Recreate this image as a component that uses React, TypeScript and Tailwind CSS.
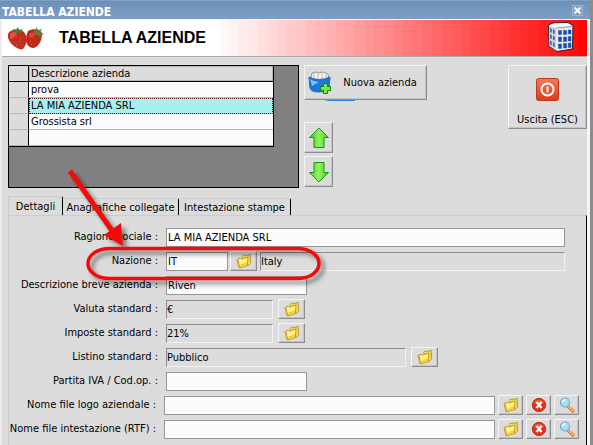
import React from "react";
import clsx from "clsx";

const companies = ["prova", "LA MIA AZIENDA SRL", "Grossista srl", ""];

const tabs = ["Dettagli", "Anagrafiche collegate", "Intestazione stampe"];

const bands = Array.from({ length: 39 }, (_, i) => i / 38);

const raised =
  "border border-t-[#f4f4f4] border-l-[#f4f4f4] border-r-[#8c8c8c] border-b-[#8c8c8c] bg-[#dcdcdc] shadow-[inset_-1px_-1px_0_#c4c4c4]";

const sunkenBox = "border-t-[#8c8c8c] border-l-[#8c8c8c] border-r-[#f2f2f2] border-b-[#f2f2f2] bg-[#dcdcdc] px-0";

function FolderIcon() {
  return (
    <svg width="16" height="16" viewBox="0 0 16 16">
      <path d="M6.500 3.500 7 2.500 10 2l.8.8L14 1l.8 9-3.300 3z" fill="#f8dc50" stroke="#b98e1c" strokeWidth=".9" />
      <path d="M1 6.500 4.500 5l1 1.200L12 4l-.6 8.600L3.200 15z" fill="#fff38a" stroke="#b98e1c" strokeWidth=".9" />
      <path d="M3.800 12 11.200 9l-.2 3.200-7.400 2.200z" fill="#f6cf30" />
      <path d="M1.200 6.500 3.300 14.800l.8-.4L2.600 6.500z" fill="#d0a030" />
    </svg>
  );
}

function DeleteIcon() {
  return (
    <svg width="16" height="16" viewBox="0 0 16 16">
      <circle cx="8" cy="8" r="6.700" fill="#ee2a12" stroke="#c03a2a" />
      <path d="M3 6a5.300 5 0 0 1 10 0q-5 2-10 0" fill="#ff765c" opacity=".6" />
      <path d="m5.400 5 5.200 6M10.600 5 5.400 11" stroke="#fff" strokeWidth="2.400" />
    </svg>
  );
}

function SearchIcon() {
  return (
    <svg width="16" height="16" viewBox="0 0 16 16">
      <path d="m9 9.500 5 4.500" stroke="#d07a3c" strokeWidth="3.200" strokeLinecap="round" />
      <path d="m10 10 4 3.600" stroke="#ffb45e" strokeWidth="1.800" strokeLinecap="round" />
      <circle cx="6" cy="5.500" r="4.500" fill="#a9def8" stroke="#7aa6cc" strokeWidth="1.200" />
      <path d="M3.300 5a3 3 0 0 1 3.200-2.200" stroke="#fff" strokeWidth="1.400" fill="none" />
    </svg>
  );
}

function StrawberryIcon() {
  return (
    <svg width="38" height="25" viewBox="0 0 38 25">
      <path d="M21 5c5-3 12-2 14 2 0 7-2 12-8 15-6 0-9-5-8-11z" fill="#bd2a1b" />
      <path d="M1 8c2-5 12-6 16-2 4 5 3 12-1 17-2 1-4 0-6-1C4 19 0 13 1 8z" fill="#c22d1c" />
      <path d="M2.500 9c2-3 5-4 7-2-1 4-4 5-6 6z" fill="#de5440" />
      <path d="M22 8c2-2 5-2 6-1 0 3-2 4-5 5z" fill="#d44c38" />
      <path d="m4 5 3-.5-1-2 3 1.500 2-3 1 3 4-1-2 2.500 2 1.500-4-.5-3 1-1-1.500z" fill="#5c7334" />
      <path d="m26 5 3-1 0-3 2 3 4-1-2 3 4 2-4 1 1 4-3-4-3 0 0-3z" fill="#647b38" />
      <path d="M5 12h1m3-2h1m3 2h1m-7 4h1m4 0h1m1 3h1m-6 0h1m9-7h1m3 3h1m2-3h1m-3 6h1m-5 0h1" stroke="#dd6848" />
    </svg>
  );
}

function BuildingIcon() {
  return (
    <svg width="28" height="32" viewBox="0 0 28 32">
      <path d="M1.500 4 6 2l15-.5L26 4.500 25.500 28 10 30.500 2 25z" fill="#ececec" stroke="#222" />
      <path d="M2 4.500 9 7v22.500L2.500 25z" fill="#d0d0d0" />
      <path d="m2 4.500 5-2h13.500l5 2.500L9 7z" fill="#fafafa" />
      <path d="m9 7 16.500-1.500" stroke="#999" />
      <path d="M11.500 9.500h3v4h-3zm5 0h3v4h-3zm4.700-.5h2.800v4h-2.800zM11.500 16h3v4.500h-3zm5 0h3v4.500h-3zm4.700-.5h2.800V20h-2.800zM11.500 23h3v4.500h-3zm5-.500h3V27h-3zm4.700-.500h2.800v4.500h-2.800z" fill="#1550b4" stroke="#1550b4" strokeWidth=".5" />
      <path d="m3 7 1.700.7v4L3 11zm3 1.200 1.700.7v4L6 12.200zM3 13.300l1.700.8v4L3 17.200zm3 1.500 1.700.8v4L6 18.700zm-3 4.700 1.700.9v4L3 23.300zm3 1.800 1.700 1v4L6 25z" fill="#2b68c8" />
    </svg>
  );
}

function NewCompanyIcon() {
  return (
    <svg width="24" height="24" viewBox="0 0 24 24">
      <path d="m3 7 1-5 4-1 3 1 3-1 4 1 2 1 1 5-9 3z" fill="#f4f4f4" stroke="#999" />
      <path d="M6 2v5m4-5v6m4-6v6m4-5v4" stroke="#b5b5b5" />
      <path d="M1 6q10 5 21 0l-1 11q-2 4-10 4-8 0-9-4z" fill="#1878dc" stroke="#2468b4" />
      <path d="M2 8q4 3 9 3l-7 4z" fill="#7cc4fa" />
      <path d="M15.500 12.500h4v3h3v4h-3v3h-4v-3h-3v-4h3z" fill="#7ae838" stroke="#1b7d1b" />
    </svg>
  );
}

function ArrowIcon({ down }: { down?: boolean }) {
  return (
    <svg width="22" height="22" viewBox="0 0 22 22" className={clsx(down && "rotate-180")}>
      <defs>
        <linearGradient id="green" x1="0" x2="1">
          <stop offset="0" stopColor="#3fc81e" />
          <stop offset=".5" stopColor="#8cf55a" />
          <stop offset="1" stopColor="#4ed42a" />
        </linearGradient>
      </defs>
      <path d="M11 1 20.500 10.500H16v10H6v-10H1.500z" fill="url(#green)" stroke="#239020" />
    </svg>
  );
}

function PowerIcon() {
  return (
    <svg width="23" height="23" viewBox="0 0 23 23">
      <defs>
        <linearGradient id="power" x2="0" y2="1">
          <stop stopColor="#f07a58" />
          <stop offset="1" stopColor="#dc3c18" />
        </linearGradient>
      </defs>
      <rect x=".5" y=".5" width="22" height="22" rx="2" fill="url(#power)" stroke="#c0391c" />
      <circle cx="11.500" cy="11.500" r="6" fill="none" stroke="#fff" strokeWidth="2" />
      <path d="M11.500 8.500v6" stroke="#fff" strokeWidth="2" />
    </svg>
  );
}

function IconButton({ label, wide, children }: { label: string; wide?: boolean; children: React.ReactNode }) {
  return (
    <button
      type="button"
      aria-label={label}
      className={clsx("flex h-5 shrink-0 items-center justify-center", wide ? "w-[27px]" : "w-[25px]", raised)}
    >
      {children}
    </button>
  );
}

interface RowProps {
  id: string;
  label: string;
  value?: string;
  sunken?: boolean;
  file?: boolean;
  width: string;
  children?: React.ReactNode;
}

function Row({ id, label, value = "", sunken, file, width, children }: RowProps) {
  return (
    <div className="flex h-5 items-center">
      <label htmlFor={id} className={clsx("mr-2 shrink-0 text-right whitespace-nowrap", file ? "w-[147px]" : "w-[149px]")}>
        {label} :
      </label>
      <input
        id={id}
        defaultValue={value}
        readOnly={sunken}
        className={clsx("h-[19px] min-w-0 border outline-none", width, sunken ? sunkenBox : "border-[#969696] bg-[#fbfbfb] px-px")}
      />
      {children}
    </div>
  );
}

function Annotation() {
  return (
    <svg className="pointer-events-none absolute top-0 left-0" width="340" height="300" viewBox="0 0 340 300">
      <g style={{ filter: "drop-shadow(4px 4px 2px rgba(0,0,0,.45))" }}>
        <path
          d="M110 248.500H297C311 248.500 319 256 319 263.500S311 278.500 297 278.500H110C96 278.500 88 271 88 263.500S96 248.500 110 248.500z"
          fill="none"
          stroke="#f80808"
          strokeWidth="3.500"
        />
        <path d="m70 171 43 61" stroke="#f80808" strokeWidth="5" />
        <path d="m123 246-19-11 17-12z" fill="#f80808" />
      </g>
    </svg>
  );
}

function App() {
  return (
    <div className="relative flex min-h-screen bg-[#8c8c8c] pr-[3px] font-['DejaVu_Sans_Condensed','DejaVu_Sans',sans-serif] text-[11px] leading-[14px] text-black">
      <div className="flex min-w-0 flex-1 flex-col bg-[#dcdcdc]">
        <div className="flex h-[19px] items-center justify-between border-t border-[#7f9fc4] bg-gradient-to-b from-[#6b91b8] to-[#7e9fc5] pr-[7px] pl-0.5">
          <span className="pt-1 text-[12px] font-bold text-white">TABELLA AZIENDE</span>
          <button type="button" aria-label="Chiudi" className="flex size-[11px] items-center justify-center border border-[#9cb6d2] bg-[#7f9fc0]">
            <svg width="7" height="7" viewBox="0 0 7 7" className="shrink-0">
              <path d="m.5.5 6 6m0-6-6 6" stroke="#fff" strokeWidth="2" />
            </svg>
          </button>
        </div>

        <div className="flex flex-1 flex-col border-r-[3px] border-l-2 border-r-[#f4f6f8] border-l-[#ececec]">
          <header className="relative flex h-[38px] border-t border-b border-t-[#eef2f6] border-b-[#aaa] bg-white">
            <div className="flex w-[208px] shrink-0 items-center gap-3.5 pl-[5px]">
              <StrawberryIcon />
              <h1 className="font-['Liberation_Sans',Arial,sans-serif] text-[16px] font-bold whitespace-nowrap">TABELLA AZIENDE</h1>
            </div>
            <div className="flex flex-1">
              {bands.map((alpha) => (
                <div key={alpha} className="flex-1" style={{ backgroundColor: `rgb(255 ${255 - alpha * 250} ${255 - alpha * 250})` }} />
              ))}
            </div>
            <div className="absolute top-px right-3">
              <BuildingIcon />
            </div>
          </header>

          <div className="flex items-start pt-2 pl-1.5">
            <div className="h-[123px] w-[291px] shrink-0 border border-black bg-[#808080]">
              <table className="w-[265px] table-fixed border-separate border-spacing-0 border-r border-b border-black leading-[15px]">
                <thead>
                  <tr>
                    <th className="h-4 w-5 border-r border-b border-black bg-[#dcdcdc] p-0" />
                    <th className="h-4 border-b border-black bg-[#dcdcdc] p-0 pl-0.5 text-left font-normal shadow-[inset_-1px_-1px_0_#b4b4b4,inset_1px_1px_0_#b4b4b4]">
                      Descrizione azienda
                    </th>
                  </tr>
                </thead>
                <tbody>
                  {companies.map((name, i) => (
                    <tr key={i}>
                      <td className="h-4 border-r border-b border-r-black border-b-[#b8b8b8] bg-[#dcdcdc] p-0" />
                      <td
                        className={clsx(
                          "h-4 border-b border-[#b8b8b8] p-0 pl-0.5",
                          i === 1 ? "bg-[#a8f0f0] outline-1 -outline-offset-1 outline-dotted outline-[#501010]" : "bg-[#fbfbfb]"
                        )}
                      >
                        {name}
                      </td>
                    </tr>
                  ))}
                </tbody>
              </table>
            </div>

            <div className="ml-[5px] flex flex-col items-start">
              <button type="button" className={clsx("relative flex h-[35px] w-[123px] items-center pl-[3px]", raised)}>
                <NewCompanyIcon />
                <span className="flex-1 pl-0.5 text-center whitespace-nowrap">Nuova azienda</span>
                <span className="absolute -bottom-[2px] left-5 h-px w-[30px] border-l-2 border-[#70d860] bg-[#3088e0]" />
              </button>
              <button type="button" aria-label="Sposta su" className={clsx("mt-[22px] flex h-[31px] w-[29px] items-center justify-center", raised)}>
                <ArrowIcon />
              </button>
              <button type="button" aria-label="Sposta giù" className={clsx("mt-[3px] flex h-[31px] w-[29px] items-center justify-center", raised)}>
                <ArrowIcon down />
              </button>
            </div>

            <button type="button" className={clsx("ml-auto flex h-16 w-[79px] flex-col items-center justify-between pt-3 pb-px", raised)}>
              <PowerIcon />
              <span>Uscita (ESC)</span>
            </button>
          </div>

          <div role="tablist" className="mt-2 flex h-[19px] items-end pl-1.5">
            {tabs.map((tab, i) => (
              <button
                key={tab}
                type="button"
                role="tab"
                aria-selected={i === 0}
                className={clsx(
                  "rounded-tr-[2px] border-t border-r border-t-[#cdcdcd] border-r-black whitespace-nowrap",
                  i === 0 && "h-[19px] w-[55px] rounded-tl-[2px] border-l border-l-[#cdcdcd] pt-0.5",
                  i === 1 && "h-[17px] w-[116px] pt-0.5",
                  i === 2 && "h-[17px] w-[112px] pt-0.5"
                )}
              >
                {tab}
              </button>
            ))}
          </div>

          <form className="ml-1.5 flex flex-1 flex-col gap-1 border-t border-r border-l border-t-[#cdcdcd] border-r-black border-l-[#cdcdcd] pt-[11px] pr-[7px]">
            <Row id="ragione" label="Ragione sociale" value="LA MIA AZIENDA SRL" width="mr-[14px] flex-1" />
            <Row id="nazione" label="Nazione" value="IT" width="w-[62px]">
              <div className="mr-[14px] ml-0.5 flex flex-1 items-center gap-[3px]">
                <IconButton label="Scegli nazione" wide>
                  <FolderIcon />
                </IconButton>
                <input aria-label="Nome nazione" readOnly value="Italy" className={clsx("h-[19px] min-w-0 flex-1 border outline-none", sunkenBox)} />
              </div>
            </Row>
            <Row id="descrizione" label="Descrizione breve azienda" value="Riven" width="w-[141px]" />
            <Row id="valuta" label="Valuta standard" value="€" sunken width="mr-[5px] w-[107px]">
              <IconButton label="Scegli valuta" wide>
                <FolderIcon />
              </IconButton>
            </Row>
            <Row id="imposte" label="Imposte standard" value="21%" sunken width="mr-[5px] w-[107px]">
              <IconButton label="Scegli imposte" wide>
                <FolderIcon />
              </IconButton>
            </Row>
            <Row id="listino" label="Listino standard" value="Pubblico" sunken width="mr-[5px] w-[240px]">
              <IconButton label="Scegli listino" wide>
                <FolderIcon />
              </IconButton>
            </Row>
            <Row id="partita" label="Partita IVA / Cod.op." width="w-[141px]" />
            {["Nome file logo aziendale", "Nome file intestazione (RTF)"].map((label) => (
              <Row key={label} id={label.replace(/\W/g, "")} label={label} file width="flex-1">
                <div className="ml-[3px] flex gap-[3px]">
                  <IconButton label="Apri">
                    <FolderIcon />
                  </IconButton>
                  <IconButton label="Elimina">
                    <DeleteIcon />
                  </IconButton>
                  <IconButton label="Cerca">
                    <SearchIcon />
                  </IconButton>
                </div>
              </Row>
            ))}
          </form>
        </div>
      </div>
      <Annotation />
    </div>
  );
}

export default App;
